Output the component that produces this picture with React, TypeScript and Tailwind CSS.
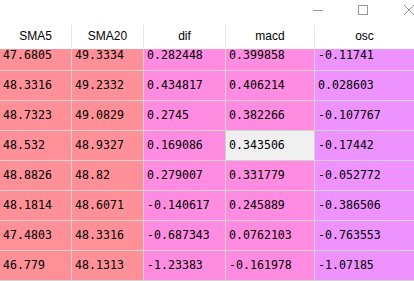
import React from 'react';

type Row = [string, string, string, string, string];

const rows: Row[] = [
  ['47.6805', '49.3334', '0.282448', '0.399858', '-0.11741'],
  ['48.3316', '49.2332', '0.434817', '0.406214', '0.028603'],
  ['48.7323', '49.0829', '0.2745', '0.382266', '-0.107767'],
  ['48.532', '48.9327', '0.169086', '0.343506', '-0.17442'],
  ['48.8826', '48.82', '0.279007', '0.331779', '-0.052772'],
  ['48.1814', '48.6071', '-0.140617', '0.245889', '-0.386506'],
  ['47.4803', '48.3316', '-0.687343', '0.0762103', '-0.763553'],
  ['46.779', '48.1313', '-1.23383', '-0.161978', '-1.07185'],
];

const headers = ['SMA5', 'SMA20', 'dif', 'macd', 'osc'];
const widths = ['w-[72px]', 'w-[72px]', 'w-[82px]', 'w-[89px]', 'flex-1'];
const fills = ['bg-[#ff9097]', 'bg-[#ff9097]', 'bg-[#ff8ce0]', 'bg-[#ff8ce0]', 'bg-[#ee92ff]'];

export default function App() {
  return (
    <div className="w-[414px] h-[281px] bg-white overflow-hidden flex flex-col">
      {/* title bar */}
      <div className="h-[25px] shrink-0 flex items-start justify-end">
        <svg width="414" height="25" className="block">
          <line x1="313" y1="10.5" x2="323" y2="10.5" stroke="#999" strokeWidth="1" />
          <rect x="358.5" y="5.5" width="9" height="9" fill="none" stroke="#999" strokeWidth="1" />
          <line x1="404" y1="5" x2="414" y2="15" stroke="#999" strokeWidth="1" />
          <line x1="414" y1="5" x2="404" y2="15" stroke="#999" strokeWidth="1" />
        </svg>
      </div>

      {/* header */}
      <div className="h-[24px] shrink-0 flex bg-white text-[12px] text-black font-['Liberation_Sans',sans-serif]">
        {headers.map((h, i) => (
          <div
            key={h}
            className={`${widths[i]} shrink-0 flex items-center justify-center pb-[2px] ${i < 4 ? 'border-r border-[#e5e5e5]' : ''}`}
          >
            {h}
          </div>
        ))}
      </div>

      {/* body, scrolled a little */}
      <div className="flex-1 overflow-hidden">
        <div className="-mt-[8px] font-['DejaVu_Sans_Mono',monospace] text-[11.6px] text-black">
          {rows.map((r, ri) => (
            <div key={ri} className="h-[30px] flex border-b border-[#d2d2d2]">
              {r.map((v, ci) => {
                const selected = ri === 3 && ci === 3;
                return (
                  <div
                    key={ci}
                    className={`${widths[ci]} shrink-0 flex items-center pl-[3px] ${ci < 4 ? 'border-r border-[#d2d2d2]' : ''} ${selected ? 'bg-[#f0f0f0]' : fills[ci]}`}
                  >
                    {v}
                  </div>
                );
              })}
            </div>
          ))}
        </div>
      </div>
    </div>
  );
}
